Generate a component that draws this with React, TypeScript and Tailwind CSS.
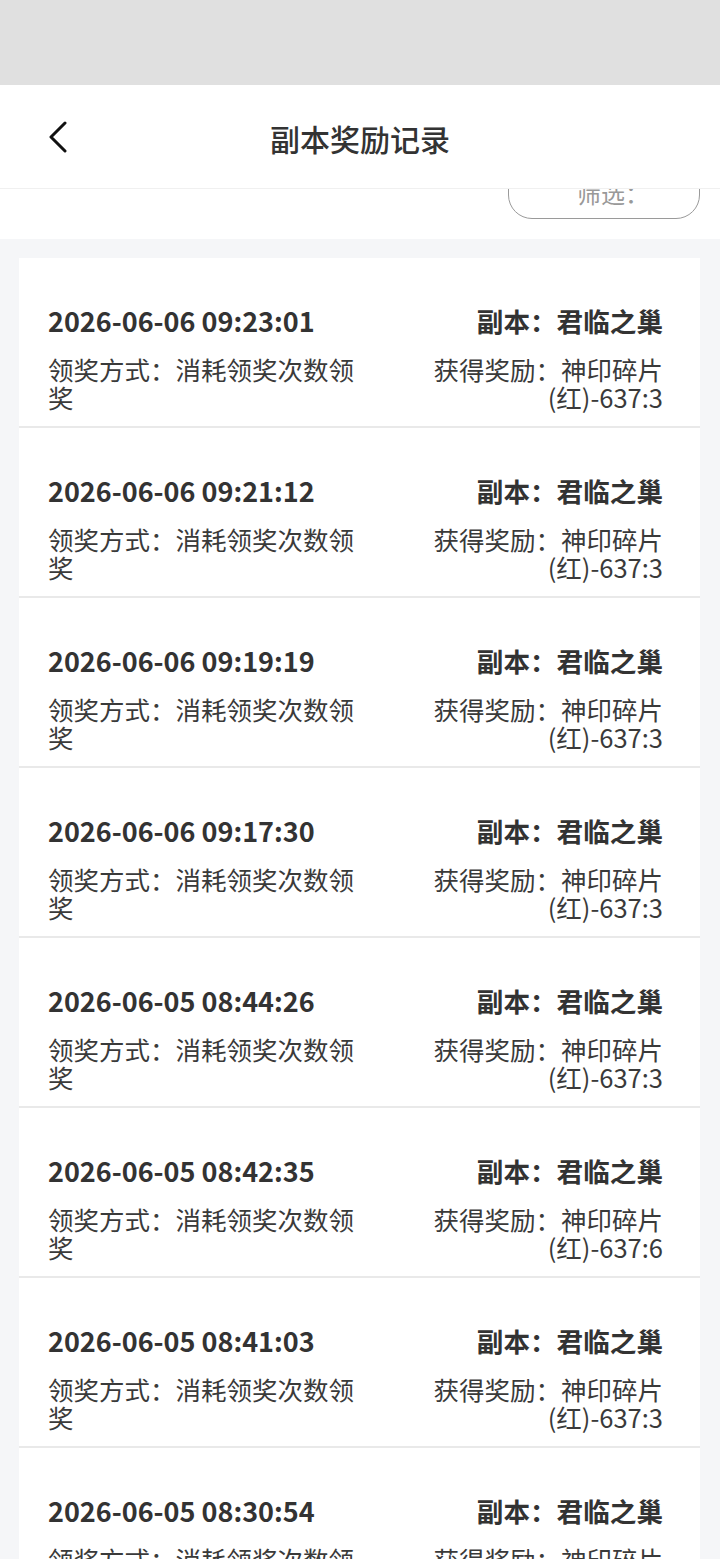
import React from "react";

const records = [
  { time: "2026-06-06 09:23:01", reward: "神印碎片(红)-637:3" },
  { time: "2026-06-06 09:21:12", reward: "神印碎片(红)-637:3" },
  { time: "2026-06-06 09:19:19", reward: "神印碎片(红)-637:3" },
  { time: "2026-06-06 09:17:30", reward: "神印碎片(红)-637:3" },
  { time: "2026-06-05 08:44:26", reward: "神印碎片(红)-637:3" },
  { time: "2026-06-05 08:42:35", reward: "神印碎片(红)-637:6" },
  { time: "2026-06-05 08:41:03", reward: "神印碎片(红)-637:3" },
  { time: "2026-06-05 08:30:54", reward: "神印碎片(红)-637:3" },
];

const font = { fontFamily: '"Noto Sans CJK SC", "Noto Sans", sans-serif' };

export default function App() {
  return (
    <div className="w-[720px] h-[1559px] overflow-hidden bg-[#f5f6f8] text-[#333]" style={font}>
      <div className="h-[85px] bg-[#e0e0e0]" />
      <div className="relative z-10 h-[104px] bg-white border-b border-[#f0f0f0] flex items-center justify-center">
        <svg className="absolute left-[46px] top-[36px]" width="26" height="32" viewBox="0 0 26 32" fill="none">
          <path d="M19 2 L5 16 L19 30" stroke="#111" strokeWidth="3" strokeLinecap="round" strokeLinejoin="round" />
        </svg>
        <div className="text-[30px] leading-none font-medium text-[#333] mt-[2px]">副本奖励记录</div>
      </div>
      <div className="bg-white h-[50px] flex justify-end pr-[20px]">
        <div className="w-[192px] h-[56px] -mt-[26px] rounded-[24px] border-[1.5px] border-[#9a9a9a] flex items-center pl-[68px] text-[24px] text-[#999] pt-[4px]">
          筛选：
        </div>
      </div>
      <div className="pt-[19px] pl-[19px] pr-[20px] flex flex-col">
        {records.map((r, i) => (
          <div key={i} className="bg-white h-[170px] border-b-2 border-[#e9e9e9] pl-[29px] pr-[37px] pt-[45px]">
            <div className="flex justify-between items-center h-[36px] text-[27px] font-bold text-[#333]">
              <span>{r.time}</span>
              <span className="text-[26.6px]">副本：君临之巢</span>
            </div>
            <div className="flex justify-between mt-[16px] text-[25.5px] leading-[28px] text-[#3a3a3a]">
              <div className="w-[320px]">领奖方式：消耗领奖次数领奖</div>
              <div className="w-[240px] text-right">获得奖励：{r.reward}</div>
            </div>
          </div>
        ))}
      </div>
    </div>
  );
}
